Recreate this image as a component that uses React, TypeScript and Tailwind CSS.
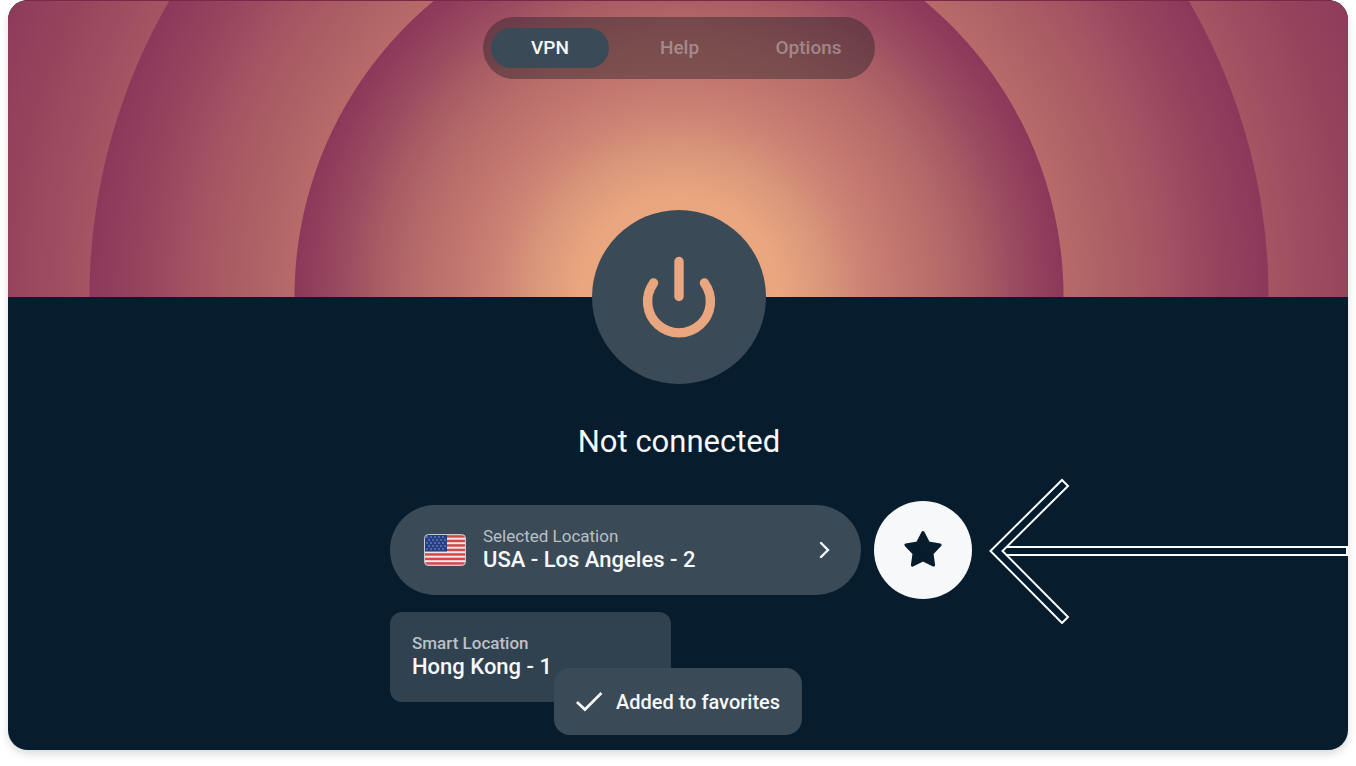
import { useState } from "react";

const tabs = ["VPN", "Help", "Options"];

const stripes = [0, 1, 2, 3, 4, 5, 6];
const starRows = [3, 6, 9, 12, 15];

function PowerIcon() {
  return (
    <svg viewBox="0 0 80 84" className="w-20 h-21" fill="none" stroke="#EAA67F" strokeWidth="9.4" strokeLinecap="round">
      <path d="M40 6.500V41.500" />
      <path d="M14.600 28A31.400 31.400 0 1 0 65.400 28" />
    </svg>
  );
}

function UsaFlag() {
  return (
    <svg viewBox="0 0 42 32" className="w-[42px] h-8 shrink-0" aria-hidden="true">
      <defs>
        <clipPath id="flag">
          <rect x="0.5" y="0.5" width="41" height="31" rx="4" />
        </clipPath>
      </defs>
      <g clipPath="url(#flag)">
        <rect width="42" height="32" fill="#F3E9EA" />
        {stripes.map((i) => (
          <rect key={i} x="0" y={1.2 + i * 4.5} width="42" height="2.5" fill="#D2484A" />
        ))}
        <rect width="23" height="17.5" fill="#243F86" />
        {starRows.map((y, row) =>
          [3, 7, 11, 15, 19].map((x) => (
            <circle key={`${x}-${y}`} cx={x + (row % 2) * 2} cy={y} r="0.7" fill="#A9B8DA" />
          ))
        )}
      </g>
      <rect x="0.5" y="0.5" width="41" height="31" rx="4" fill="none" stroke="#C5CACF" />
    </svg>
  );
}

function StarIcon() {
  return (
    <svg viewBox="0 0 40 40" className="w-10 h-10" fill="#071D2D" stroke="#071D2D" strokeWidth="3" strokeLinejoin="round">
      <path d="M20 2.500L25.600 13.100L37.100 14.900L29 23.400L30.600 35.100L20 30L9.400 35.100L11 23.400L2.900 14.900L14.400 13.100Z" />
    </svg>
  );
}

function PointerArrow() {
  return (
    <svg
      viewBox="0 0 360 146"
      className="absolute right-0 top-[478px] w-[360px] h-[146px] pointer-events-none"
      fill="#001C2E"
      stroke="#fff"
      strokeWidth="2"
      aria-hidden="true"
    >
      <path d="M18 69H359V77H18" />
      <path d="M2.500 73L74 2L80 8L14.500 73L80 139L74 145Z" />
    </svg>
  );
}

export default function App() {
  const [active, setActive] = useState("VPN");
  const [favorite, setFavorite] = useState(true);

  return (
    <div className="min-h-screen bg-white px-2 pb-4 font-[Roboto,sans-serif]">
      <main className="relative overflow-hidden rounded-[20px] bg-[#071D2D] min-h-[750px] text-[#F7F8FA] shadow-[0_4px_8px_rgba(0,0,0,0.14)]">
        <header className="flex justify-center items-start h-[297px] pt-4 pl-0.5 border-t border-[#792947] bg-[radial-gradient(circle_at_calc(50%+1px)_100%,#EAA67F_100px,#D8957A_149px,#CE8474_181px,#C37770_218px,#B66B69_264px,#A95D64_301px,#9C4C61_334px,#903D5C_370px,#8C385B_384px,#B76A69_385px,#AE6265_425px,#A55463_481px,#98455F_531px,#8C385B_589px,#A65463_590px,#9F4E61_620px,#96445D_670px,#8C385B_745px)]">
          <nav className="flex items-center gap-3 rounded-full bg-[#221E26]/42 p-2 h-[62px]">
            {tabs.map((tab) => (
              <button
                key={tab}
                onClick={() => setActive(tab)}
                className={
                  tab === active
                    ? "h-10 w-[118px] rounded-full bg-[#3A4A57] text-[19px] font-medium text-[#F7F8FA]"
                    : "h-10 w-[117px] rounded-full text-[19px] font-medium text-white/35"
                }
              >
                {tab}
              </button>
            ))}
          </nav>
        </header>

        <section className="flex flex-col items-center -mt-[87px] pl-0.5">
          <button
            aria-label="Connect"
            className="flex items-center justify-center w-[174px] h-[174px] rounded-full bg-[#3A4A57]"
          >
            <PowerIcon />
          </button>
          <h1 className="mt-9 text-[31px] leading-11">Not connected</h1>
        </section>

        {/* Locations */}
        <section className="flex flex-col items-center mt-[37px] pl-1.5">
          <div className="flex flex-col w-[582px] gap-[13px]">
            <div className="flex items-center gap-[13px]">
              <button className="flex flex-1 items-center h-[90px] rounded-full bg-[#3A4A57] pl-[34px] pr-6 text-left">
                <UsaFlag />
                <span className="ml-[17px] pb-1 flex flex-1 flex-col">
                  <span className="text-[17px] leading-6 text-[#B9C0C6]">Selected Location</span>
                  <span className="text-[22px] leading-6 font-medium">USA - Los Angeles - 2</span>
                </span>
                <svg viewBox="0 0 24 24" className="w-6 h-6" fill="none" stroke="#F7F8FA" strokeWidth="2.4">
                  <path d="M8 5L15 12L8 19" strokeLinecap="round" />
                </svg>
              </button>
              <button
                aria-label="Favorite"
                aria-pressed={favorite}
                onClick={() => setFavorite(!favorite)}
                className="flex items-center justify-center w-[98px] h-[98px] rounded-full bg-[#F7F8FA]"
              >
                <StarIcon />
              </button>
            </div>

            <button className="flex flex-col justify-center w-[281px] h-[90px] rounded-xl bg-[#304150] px-[22px] pb-1 text-left">
              <span className="text-[17px] leading-6 font-medium text-[#BAC1C7]">Smart Location</span>
              <span className="text-[22px] leading-6 font-medium">Hong Kong - 1</span>
            </button>
          </div>
        </section>

        <PointerArrow />

        {favorite && (
          <div
            role="status"
            className="absolute bottom-[15px] left-1/2 -translate-x-1/2 flex items-center gap-3 h-[67px] rounded-2xl bg-[#3A4A57] px-[22px] text-xl font-medium whitespace-nowrap"
          >
            <svg viewBox="0 0 28 24" className="w-7 h-6" fill="none" stroke="#F7F8FA" strokeWidth="2.7">
              <path d="M1 12L9 19.500L25.500 3" />
            </svg>
            Added to favorites
          </div>
        )}
      </main>
    </div>
  );
}
